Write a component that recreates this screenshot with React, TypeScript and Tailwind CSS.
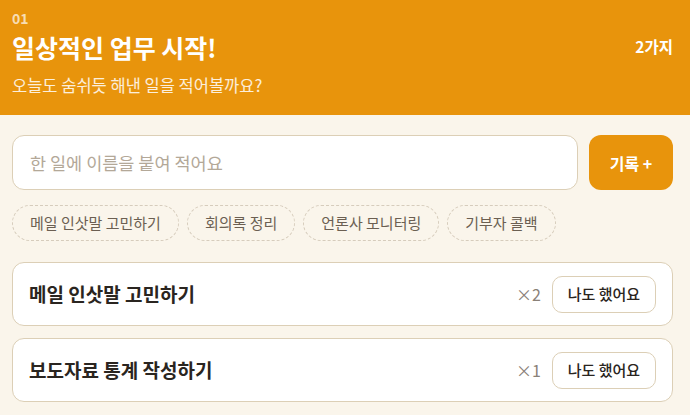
const chips = ['메일 인삿말 고민하기', '회의록 정리', '언론사 모니터링', '기부자 콜백']

const items = [
  { title: '메일 인삿말 고민하기', count: 2 },
  { title: '보도자료 통계 작성하기', count: 1 },
]

export default function App() {
  return (
    <div className="min-h-screen bg-[#faf5eb] font-['Noto_Sans_CJK_KR','Noto_Sans',sans-serif]">
      {/* Header */}
      <div className="h-[115px] bg-[#e8940c] pl-3 pr-[17px] pt-[8px]">
        <div className="text-[14px] font-bold leading-[20px] text-white/70">01</div>
        <div className="flex items-center justify-between">
          <h1 className="text-[25px] font-bold leading-[38px] text-white">일상적인 업무 시작!</h1>
          <span className="text-[15.5px] font-bold text-white">2가지</span>
        </div>
        <p className="mt-[7px] text-[16.5px] leading-[24px] text-white/85">오늘도 숨쉬듯 해낸 일을 적어볼까요?</p>
      </div>

      <div className="pl-3 pr-[17px] pt-5">
        {/* Input row */}
        <div className="flex gap-[11px]">
          <input
            className="h-[55px] flex-1 rounded-xl border border-[#dccfb6] bg-white px-[17px] text-[17.5px] text-[#333] placeholder:text-[#b3a898] focus:outline-none"
            placeholder="한 일에 이름을 붙여 적어요"
          />
          <button className="h-[55px] w-[84px] rounded-xl bg-[#e8940c] text-[16px] font-bold text-white">
            기록 +
          </button>
        </div>

        {/* Chips */}
        <div className="mt-[15px] flex gap-2">
          {chips.map((c) => (
            <button
              key={c}
              className="h-9 rounded-full border border-dashed border-[#d6ccbc] px-[17px] text-[15px] text-[#6b5f52]"
            >
              {c}
            </button>
          ))}
        </div>

        {/* List */}
        <div className="mt-[21px] flex flex-col gap-3">
          {items.map((it) => (
            <div
              key={it.title}
              className="flex h-16 items-center justify-between rounded-xl border border-[#dccfb6] bg-white pl-4 pr-4"
            >
              <span className="text-[19px] font-semibold text-[#2a2520]">{it.title}</span>
              <div className="flex items-center gap-[11px]">
                <span className="text-[16px] text-[#8a8178]">×{it.count}</span>
                <button className="h-[37px] w-[104px] rounded-[10px] border border-[#dccfb6] bg-white text-[15px] font-medium text-[#2a2520]">
                  나도 했어요
                </button>
              </div>
            </div>
          ))}
        </div>
      </div>
    </div>
  )
}
